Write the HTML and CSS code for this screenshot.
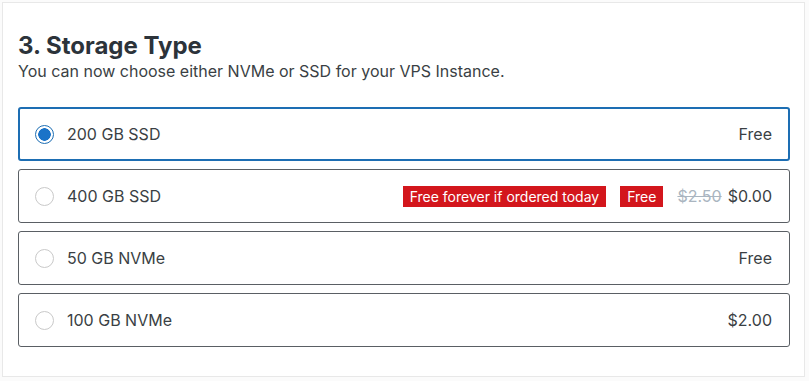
FILE: index.html
```html
<!DOCTYPE html>
<html lang="en">
<head>
  <meta charset="UTF-8" />
  <meta name="viewport" content="width=device-width, initial-scale=1.0">
  <title>Storage Type</title>
  <link rel="stylesheet" href="styles.css">
</head>
<body>
  <div class="panel">
    <h2 class="title">3. Storage Type</h2>
    <p class="subtitle">You can now choose either NVMe or SSD for your VPS Instance.</p>

    <div class="options">
      <label class="option selected">
        <span class="radio"></span>
        <span class="option-name">200 GB SSD</span>
        <span class="option-price">Free</span>
      </label>
      <label class="option">
        <span class="radio"></span>
        <span class="option-name">400 GB SSD</span>
        <span class="option-price">
          <span class="badge">Free forever if ordered today</span>
          <span class="badge">Free</span>
          <span class="old-price">$2.50</span>
          <span>$0.00</span>
        </span>
      </label>
      <label class="option">
        <span class="radio"></span>
        <span class="option-name">50 GB NVMe</span>
        <span class="option-price">Free</span>
      </label>
      <label class="option">
        <span class="radio"></span>
        <span class="option-name">100 GB NVMe</span>
        <span class="option-price">$2.00</span>
      </label>
    </div>
  </div>
</body>
</html>
```

FILE: styles.css
```css
html, body {
  margin: 0;
  padding: 0;
  font-family: Inter, "Liberation Sans", Arial, sans-serif;
}
body {
  background-color: #fbfbfb;
  padding: 2px 4px 3px 2px;
}
.panel {
  background-color: white;
  border: 1px solid #e8e8e8;
  padding: 28px 14px 29px 15px;
}
.title {
  margin: 0;
  font-size: 24px;
  font-weight: 700;
  color: #2c333a;
  line-height: 30px;
}
.subtitle {
  margin: 0 0 26px;
  font-size: 16px;
  color: #3a3f44;
  line-height: 20px;
}
.options {
  display: flex;
  flex-direction: column;
  gap: 8px;
}
.option {
  display: flex;
  align-items: center;
  height: 54px;
  box-sizing: border-box;
  border: 1px solid #5a5f64;
  border-radius: 3px;
  padding: 0 17px 0 16px;
  color: #3a3f44;
  font-size: 16px;
  cursor: pointer;
}
.option.selected {
  border: 2px solid #1d6eb3;
  padding: 0 16px 0 15px;
}
.radio {
  width: 19px;
  height: 19px;
  box-sizing: border-box;
  border: 1px solid #c9c9c9;
  border-radius: 50%;
  margin-right: 13px;
  flex-shrink: 0;
}
.option.selected .radio {
  border-color: #1d6eb3;
  background: radial-gradient(circle, #1a73c8 0 6px, white 6.5px);
}
.option-name {
  flex: 1;
}
.option-price {
  display: flex;
  align-items: center;
  gap: 6px;
}
.badge {
  background-color: #d3161c;
  color: white;
  font-size: 14px;
  padding: 2px 7px;
  margin-right: 8px;
  line-height: 17px;
}
.old-price {
  color: #aab5c0;
  text-decoration: line-through;
}
```
